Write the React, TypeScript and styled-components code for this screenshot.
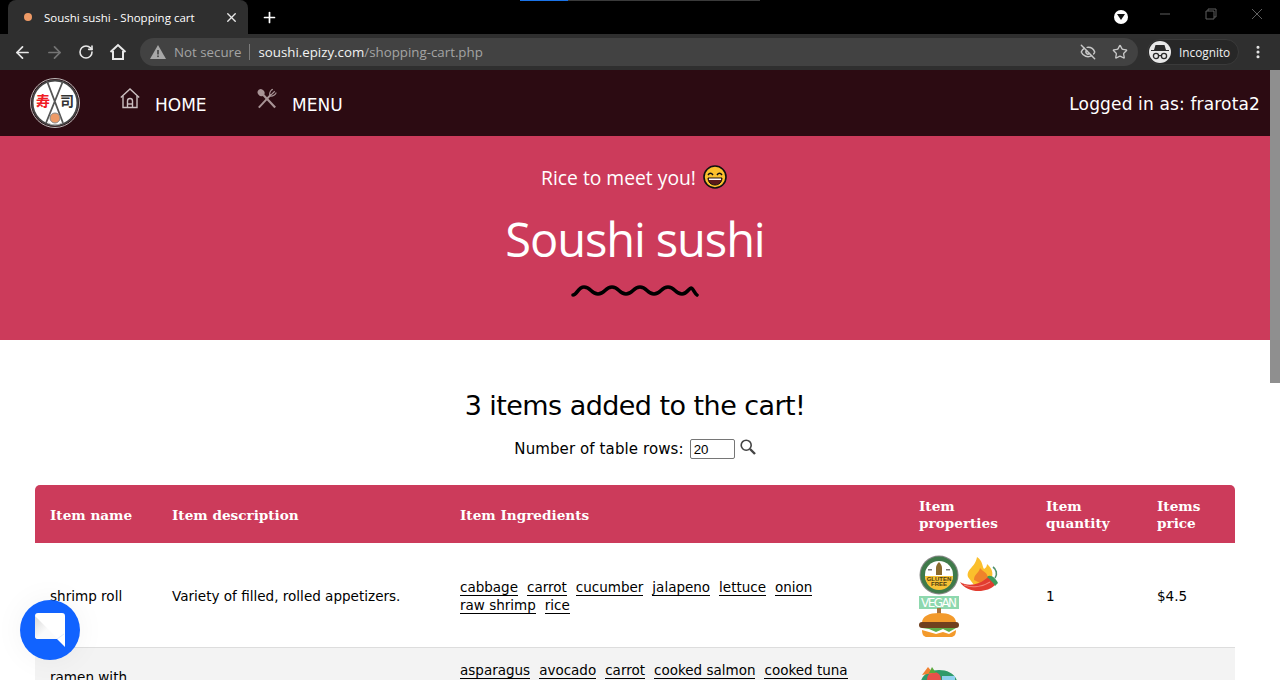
import React from 'react'
import styled, { createGlobalStyle } from 'styled-components'
import { ArrowLeft, ArrowRight, RotateCw, Plus, X, MoreVertical, Star, EyeOff } from 'lucide-react'

const GlobalStyle = createGlobalStyle`
  html, body {
    margin: 0;
    padding: 0;
    height: 680px;
    overflow: hidden;
    background: #fff;
  }
`

const Window = styled.div`
  position: relative;
  width: 1280px;
  height: 680px;
  overflow: hidden;
  display: flex;
  flex-direction: column;
`

const TabStrip = styled.div`
  position: relative;
  height: 34px;
  background: #000;
  display: flex;
  align-items: flex-end;
  padding-left: 8px;
  flex: none;
`

const LoadBar = styled.div`
  position: absolute;
  top: 0;
  left: 520px;
  width: 240px;
  height: 1px;
  background: linear-gradient(to right, #1a73e8 0 48px, #3a3a3a 48px);
`

const Tab = styled.div`
  width: 240px;
  height: 34px;
  box-sizing: border-box;
  background: #2f2f2f;
  border-radius: 8px 8px 0 0;
  display: flex;
  align-items: center;
  padding: 0 9px 0 16px;
  color: #fff;
  font: 11.5px 'Open Sans', sans-serif;
`

const Favicon = styled.span`
  width: 8px;
  height: 8px;
  border-radius: 50%;
  background: #ee9a66;
  margin-right: 12px;
  flex: none;
`

const TabTitle = styled.span`
  flex: 1;
  white-space: nowrap;
`

const NewTab = styled.div`
  margin: 0 0 0 13px;
  height: 34px;
  display: flex;
  align-items: center;
  color: #fff;
`

const WindowControls = styled.div`
  margin-left: auto;
  display: flex;
  align-items: center;
  height: 34px;
  color: #5f5f5f;
`

const ProfileDot = styled.span`
  width: 14px;
  height: 14px;
  border-radius: 50%;
  background: #fff;
  display: flex;
  align-items: center;
  justify-content: center;
  margin-right: 14px;
`

const ControlIcon = styled.span`
  width: 46px;
  display: flex;
  justify-content: center;
  margin-top: -6px;
`

const Toolbar = styled.div`
  height: 36px;
  background: #2f2f2f;
  display: flex;
  align-items: center;
  padding: 0 6px;
  flex: none;
`

const ToolIcon = styled.span<{ $dim?: boolean }>`
  width: 32px;
  display: flex;
  justify-content: center;
  color: ${p => (p.$dim ? '#747474' : '#e8e8e8')};
`

const Omnibox = styled.div`
  width: 998px;
  height: 28px;
  margin-left: 6px;
  border-radius: 14px;
  background: #424242;
  display: flex;
  align-items: center;
  padding-left: 10px;
  box-sizing: border-box;
  font: 13.3px 'Open Sans', sans-serif;
  color: #a4a4a4;
`

const NotSecure = styled.span`
  margin-left: 8px;
  padding-right: 8px;
  border-right: 1px solid #7c7c7c;
  line-height: 16px;
`

const Host = styled.span`
  color: #f2f2f2;
  margin-left: 8px;
`

const OmniIcons = styled.span`
  margin-left: auto;
  display: flex;
  gap: 16px;
  align-items: center;
  padding-right: 10px;
  color: #c8c8c8;
`

const IncognitoPill = styled.div`
  width: 92px;
  height: 26px;
  box-sizing: border-box;
  margin-left: 9px;
  border: 1px solid #3a3a3a;
  background: #272727;
  border-radius: 13px;
  display: flex;
  align-items: center;
  gap: 8px;
  padding-left: 1px;
  color: #f0f0f0;
  font: 11.8px 'Open Sans', sans-serif;
`

const IncognitoBadge = styled.span`
  width: 22px;
  height: 22px;
  border-radius: 50%;
  background: #e8e8e8;
  display: flex;
  align-items: center;
  justify-content: center;
`

const Dots = styled.span`
  margin-left: 11px;
  color: #e8e8e8;
  display: flex;
`

const Viewport = styled.div`
  flex: 1;
  display: flex;
  min-height: 0;
`

const Page = styled.div`
  flex: 1;
  min-width: 0;
  overflow: hidden;
`

const Scrollbar = styled.div`
  width: 10px;
  background: #fff;
  flex: none;
`

const ScrollThumb = styled.div`
  height: 313px;
  background: #8f8f8f;
`

const Nav = styled.nav`
  height: 66px;
  background: #2c0b12;
  display: flex;
  align-items: center;
  padding: 0 10px 0 30px;
  color: #fff;
  font: 17px 'DejaVu Sans', Verdana, sans-serif;
`

const LogoWrap = styled.div`
  width: 50px;
  height: 50px;
  flex: none;
  margin-right: 40px;
`

const NavItem = styled.a`
  display: flex;
  align-items: flex-start;
  gap: 15px;
  width: 137px;
`

const NavIcon = styled.span`
  display: flex;
  margin-top: -4px;
`

const NavLabel = styled.span`
  margin-top: 3px;
`

const LoggedIn = styled.span`
  margin-left: auto;
  margin-top: 2px;
  letter-spacing: 0.15px;
`

const Hero = styled.header`
  height: 204px;
  background: #cc3b5b;
  color: #fff;
  display: flex;
  flex-direction: column;
  align-items: center;
  font-family: 'Open Sans', 'Noto Sans', sans-serif;
`

const Greeting = styled.div`
  margin-top: 27px;
  padding-right: 2px;
  height: 28px;
  display: flex;
  align-items: center;
  gap: 7px;
  font-size: 19.3px;
`

const HeroTitle = styled.h1`
  margin: 16px 0 0;
  font-size: 47px;
  line-height: 64px;
  font-weight: 400;
  letter-spacing: -1.1px;
`

const Squiggle = styled.div`
  margin-top: 13px;
  display: flex;
`

const Content = styled.main`
  padding: 46px 35px 0;
  text-align: center;
`

const CartTitle = styled.h2`
  margin: 0;
  font: 400 27px/40px 'DejaVu Sans', Verdana, sans-serif;
  letter-spacing: -0.55px;
  color: #000;
`

const RowsForm = styled.form`
  margin: 10px 0 23px;
  display: flex;
  justify-content: center;
  align-items: center;
  height: 26px;
  font: 15px 'DejaVu Sans', Verdana, sans-serif;
  letter-spacing: 0.1px;
  color: #000;
`

const RowsInput = styled.input`
  width: 45px;
  height: 20px;
  box-sizing: border-box;
  margin: 0 5px 0 6px;
  padding: 0 3px;
  border: 1px solid #767676;
  border-radius: 2px;
  font: 13.3px 'Liberation Sans', Arial, sans-serif;
`

const SearchButton = styled.span`
  display: flex;
  margin-top: -5px;
`

const Table = styled.table`
  width: 1200px;
  table-layout: fixed;
  border-collapse: separate;
  border-spacing: 0;
  text-align: left;
  font: 13.55px 'DejaVu Sans', Verdana, sans-serif;
  color: #000;
`

const Th = styled.th`
  height: 58px;
  padding: 2px 15px 0;
  box-sizing: border-box;
  background: #cc3b5b;
  color: #fff;
  font: 700 13.6px/17px 'DejaVu Serif', Georgia, serif;

  &:first-child {
    border-top-left-radius: 5px;
  }

  &:last-child {
    border-top-right-radius: 5px;
  }
`

const Tr = styled.tr<{ $shaded?: boolean }>`
  background: ${p => (p.$shaded ? '#f3f3f3' : '#fff')};
`

const Td = styled.td`
  height: 105px;
  padding: 2px 15px 0;
  box-sizing: border-box;
  border-bottom: 1px solid #ddd;
  line-height: 18px;
`

const TopTd = styled.td<{ $top: number }>`
  vertical-align: top;
  padding: ${p => p.$top}px 15px 0;
  line-height: 18px;
`

const Chip = styled.a`
  display: inline-block;
  vertical-align: top;
  margin-right: 9px;
  font-size: 13.5px;
  line-height: 16px;
  height: 18px;
  padding-top: 1px;
  box-sizing: border-box;
  border-bottom: 1px solid #000;
`

const IconGrid = styled.div`
  display: grid;
  grid-template-columns: 40px 40px;
  column-gap: 1px;
  margin-top: -1px;
`

const IconSlot = styled.span<{ $h?: number; $first?: boolean }>`
  height: ${p => p.$h ?? 40}px;
  display: block;
  grid-column: ${p => (p.$first ? 1 : 'auto')};
`

const ChatBubble = styled.div`
  position: absolute;
  left: 20px;
  top: 600px;
  width: 60px;
  height: 60px;
  border-radius: 50%;
  background: #1163ff;
  box-shadow: 0 0 30px rgba(0, 0, 0, 0.05);
  display: flex;
  align-items: center;
  justify-content: center;
`

const GlutenFree = () => (
  <svg width="40" height="40" viewBox="0 0 40 40">
    <circle cx="20" cy="20" r="19.5" fill="#888" />
    <circle cx="20" cy="20" r="18.5" fill="#3f7a4a" />
    <circle cx="20" cy="20" r="14" fill="#fff" />
    <path d="M6 21 H34 A14 14 0 0 1 6 21Z" fill="#f6c136" />
    <path d="M20 7 C22 9 23 11 23 13 V20 H17 V13 C17 11 18 9 20 7Z" fill="#8a6a2c" />
    <rect x="9" y="14" width="4" height="1.5" fill="#777" />
    <rect x="27" y="14" width="4" height="1.5" fill="#777" />
    <text x="20" y="26" textAnchor="middle" fontSize="6" fontWeight="700" fontFamily="Liberation Sans" fill="#4a3a10">GLUTEN</text>
    <text x="20" y="31" textAnchor="middle" fontSize="6" fontWeight="700" fontFamily="Liberation Sans" fill="#4a3a10">FREE</text>
  </svg>
)

const Chili = () => (
  <svg width="40" height="40" viewBox="0 0 40 40">
    <path d="M8 22 C6 14 15 13 17 2 C23 6 22 11 24 14 C26 13 27 11 27 9 C33 14 34 20 30 26 L14 30Z" fill="#fbbf2c" />
    <path d="M14 25 C14 19 19 18 20 13 C23 17 28 17 28 24 L22 29Z" fill="#f0822a" />
    <path d="M0 27 C8 32 20 30 28 22 C33 22 37 26 35 30 C28 38 7 39 0 27Z" fill="#e23c30" />
    <path d="M4 30 C12 33 22 32 30 27" stroke="#f4847a" strokeWidth="1.2" fill="none" />
    <path d="M27 22 C30 19 35 22 38 28 L35 31 C33 27 30 25 27 22Z" fill="#3f9a5a" />
    <path d="M35 23 C38 19 36 14 33 12" stroke="#4f8f6a" strokeWidth="1.6" fill="none" />
  </svg>
)

const Vegan = () => (
  <svg width="40" height="13" viewBox="0 0 40 13">
    <rect x="0" y="0" width="40" height="13" fill="#8ed8ae" />
    <text x="20" y="11" textAnchor="middle" fontSize="12" fontFamily="DejaVu Sans" fill="#fff" textLength="36">VEGAN</text>
  </svg>
)

const Burger = () => (
  <svg width="40" height="29" viewBox="0 0 40 29">
    <rect x="18" y="0" width="4" height="7" fill="#a9713c" />
    <path d="M3 15 C3 8 10 5 20 5 C30 5 37 8 37 15Z" fill="#f39a2b" />
    <rect x="0" y="14" width="40" height="6" rx="3" fill="#70401f" />
    <path d="M3 20 H37 L30 24 L24 21 L17 24 L10 21Z" fill="#5fae4c" />
    <path d="M3 22 L10 24 L17 26 L24 24 L30 26 L37 22 C37 27 35 29 32 29 H8 C5 29 3 27 3 22Z" fill="#f39a2b" />
  </svg>
)

const Salad = () => (
  <svg width="40" height="40" viewBox="0 0 40 40">
    <path d="M1 20 C1 8 10 3 20 3 C30 3 39 8 39 20Z" fill="#2f9a6a" />
    <circle cx="15" cy="12" r="7" fill="#e8504a" />
    <path d="M3 8 L9 0 L14 6Z" fill="#f08030" />
    <path d="M13 0 L17 6 L10 6Z" fill="#5aa83c" />
    <rect x="23" y="9" width="13" height="6" fill="#8fd0ee" />
  </svg>
)

const Logo = () => (
  <svg width="50" height="50" viewBox="0 0 50 50">
    <circle cx="25" cy="25" r="24.5" fill="#2c0b12" stroke="#bdb8b8" strokeWidth="1" />
    <circle cx="25" cy="25" r="22.5" fill="#fff" stroke="#444" strokeWidth="2" />
    <path d="M17 3 L33 45 M33 3 L16 45" stroke="#555" strokeWidth="1.8" />
    <text x="13" y="28" textAnchor="middle" fontSize="14" fontWeight="700" fontFamily="Noto Sans CJK JP" fill="#f01c25">寿</text>
    <text x="37" y="28" textAnchor="middle" fontSize="14" fontWeight="700" fontFamily="Noto Sans CJK JP" fill="#333">司</text>
    <path d="M18 45 Q25 49 32 45" stroke="#bbb" fill="none" />
    <circle cx="25" cy="40" r="5" fill="#ee9a66" stroke="#8a8a8a" />
  </svg>
)

const HomeGlyph = () => (
  <svg width="20" height="21" viewBox="0 0 20 21" fill="none" stroke="#cbbfc0" strokeWidth="1.4">
    <path d="M0.8 9.5 L10 1 L19.2 9.5" />
    <path d="M3 8 V19.5 H17 V8" />
    <path d="M7.5 19.5 V13 A2.5 2.5 0 0 1 12.5 13 V19.5" />
    <path d="M7.5 16 H12.5" />
  </svg>
)

const CutleryGlyph = () => (
  <svg width="20" height="21" viewBox="0 0 22 22" fill="none" stroke="#a89496">
    <path d="M20 21 L6.5 6.5" strokeWidth="2.4" />
    <ellipse cx="4.5" cy="4.5" rx="3.6" ry="4" fill="#a89496" stroke="none" transform="rotate(-40 4.5 4.5)" />
    <path d="M2 21 L15.5 6.5" strokeWidth="2.2" />
    <path d="M14 8 C13 4 16 1 17.5 1 M14.5 8.5 C18 9 21 6 21 4.5 M15.5 7 L19.5 3" strokeWidth="1.3" />
  </svg>
)

const AlertGlyph = () => (
  <svg width="16" height="14" viewBox="0 0 16 14">
    <path d="M8 0 L16 14 H0Z" fill="#a8a8a8" />
    <rect x="7.2" y="5" width="1.6" height="4.5" fill="#424242" />
    <rect x="7.2" y="10.5" width="1.6" height="1.6" fill="#424242" />
  </svg>
)

const ToolbarHome = () => (
  <svg width="18" height="18" viewBox="0 0 18 18" fill="none" stroke="#e8e8e8" strokeWidth="2">
    <path d="M1.5 9 L9 2 L16.5 9" />
    <path d="M4 8 V16 H14 V8" />
  </svg>
)

const SpyGlyph = () => (
  <svg width="18" height="16" viewBox="0 0 18 16" fill="#2a2a2a">
    <path d="M4.5 1 H13.5 L15 6 H18 V7 H0 V6 H3Z" />
    <circle cx="5" cy="12" r="2.6" fill="none" stroke="#2a2a2a" strokeWidth="1.3" />
    <circle cx="13" cy="12" r="2.6" fill="none" stroke="#2a2a2a" strokeWidth="1.3" />
    <rect x="7.5" y="11" width="3" height="1.2" />
  </svg>
)

const SearchGlyph = () => (
  <svg width="16" height="16" viewBox="0 0 16 16" fill="none" stroke="#444" strokeWidth="1.6">
    <circle cx="6.2" cy="6.2" r="5" />
    <path d="M10 10 L15 15" strokeWidth="2.4" />
  </svg>
)

const ChatGlyph = () => (
  <svg width="30" height="34" viewBox="0 0 30 34">
    <defs>
      <linearGradient id="fold" x1="0" y1="0" x2="1" y2="1">
        <stop offset="0" stopColor="#d8d8d8" />
        <stop offset="0.55" stopColor="#fbfbfb" />
      </linearGradient>
    </defs>
    <path d="M3 0 H27 A3 3 0 0 1 30 3 V34 L22 26 H3 A3 3 0 0 1 0 23 V3 A3 3 0 0 1 3 0Z" fill="#fff" />
    <path d="M0 3 L23 26 H3 A3 3 0 0 1 0 23Z" fill="url(#fold)" />
    <path d="M22 26 L29 21" stroke="#cfe0fb" strokeWidth="0.6" />
  </svg>
)

const columns = [122, 288, 459, 127, 111, 93]

const headers = ['Item name', 'Item description', 'Item Ingredients', 'Item properties', 'Item quantity', 'Items price']

const firstIngredients = ['cabbage', 'carrot', 'cucumber', 'jalapeno', 'lettuce', 'onion', 'raw shrimp', 'rice']

const secondIngredients = ['asparagus', 'avocado', 'carrot', 'cooked salmon', 'cooked tuna']

export default function App() {
  return (
    <Window>
      <GlobalStyle />
      <TabStrip>
        <LoadBar />
        <Tab>
          <Favicon />
          <TabTitle>Soushi sushi - Shopping cart</TabTitle>
          <X size={15} strokeWidth={2.2} color="#e8e8e8" />
        </Tab>
        <NewTab>
          <Plus size={17} strokeWidth={2.4} />
        </NewTab>
        <WindowControls>
          <ProfileDot>
            <svg width="8" height="6" viewBox="0 0 8 6">
              <path d="M0 0 H8 L4 6Z" fill="#111" />
            </svg>
          </ProfileDot>
          <ControlIcon>
            <svg width="12" height="12" viewBox="0 0 12 12" stroke="currentColor" fill="none">
              <path d="M1 6 H11" />
            </svg>
          </ControlIcon>
          <ControlIcon>
            <svg width="12" height="12" viewBox="0 0 12 12" stroke="currentColor" fill="none">
              <path d="M1 3 H9 V11 H1Z M3 3 V1 H11 V9 H9" />
            </svg>
          </ControlIcon>
          <ControlIcon>
            <svg width="12" height="12" viewBox="0 0 12 12" stroke="currentColor" fill="none">
              <path d="M1 1 L11 11 M11 1 L1 11" />
            </svg>
          </ControlIcon>
        </WindowControls>
      </TabStrip>
      <Toolbar>
        <ToolIcon>
          <ArrowLeft size={19} strokeWidth={2.2} />
        </ToolIcon>
        <ToolIcon $dim>
          <ArrowRight size={19} strokeWidth={2.2} />
        </ToolIcon>
        <ToolIcon>
          <RotateCw size={16} strokeWidth={2.4} />
        </ToolIcon>
        <ToolIcon>
          <ToolbarHome />
        </ToolIcon>
        <Omnibox>
          <AlertGlyph />
          <NotSecure>Not secure</NotSecure>
          <Host>soushi.epizy.com</Host>
          <span>/shopping-cart.php</span>
          <OmniIcons>
            <EyeOff size={16} strokeWidth={2.2} />
            <Star size={16} strokeWidth={2} />
          </OmniIcons>
        </Omnibox>
        <IncognitoPill>
          <IncognitoBadge>
            <SpyGlyph />
          </IncognitoBadge>
          Incognito
        </IncognitoPill>
        <Dots>
          <MoreVertical size={16} strokeWidth={2.6} />
        </Dots>
      </Toolbar>
      <Viewport>
        <Page>
          <Nav>
            <LogoWrap>
              <Logo />
            </LogoWrap>
            <NavItem>
              <NavIcon>
                <HomeGlyph />
              </NavIcon>
              <NavLabel>HOME</NavLabel>
            </NavItem>
            <NavItem>
              <NavIcon>
                <CutleryGlyph />
              </NavIcon>
              <NavLabel>MENU</NavLabel>
            </NavItem>
            <LoggedIn>Logged in as: frarota2</LoggedIn>
          </Nav>
          <Hero>
            <Greeting>
              Rice to meet you!
              <svg width="24" height="24" viewBox="0 0 24 24">
                <circle cx="12" cy="12" r="11" fill="#fbc02d" stroke="#111" strokeWidth="1.6" />
                <path d="M5 10 Q7.5 6.5 10 10 M14 10 Q16.5 6.5 19 10" stroke="#111" strokeWidth="1.5" fill="none" />
                <path d="M5 13 H19 C19 17 16 20 12 20 C8 20 5 17 5 13Z" fill="#5b1a1a" stroke="#111" />
                <path d="M6 13.5 H18 V15 H6Z" fill="#fff" />
              </svg>
            </Greeting>
            <HeroTitle>Soushi sushi</HeroTitle>
            <Squiggle>
              <svg width="128" height="14" viewBox="0 0 128 14" fill="none" stroke="#000" strokeWidth="3.6" strokeLinecap="round">
                <path d="M2 11 C6 11 7 3 13 3 C20 3 20 10 27 10 C34 10 34 3 41 3 C48 3 48 10 55 10 C62 10 62 3 69 3 C76 3 76 10 83 10 C90 10 90 3 97 3 C104 3 104 10 111 10 C116 10 118 4 120 4 C122 4 124 10 126 11" />
              </svg>
            </Squiggle>
          </Hero>
          <Content>
            <CartTitle>3 items added to the cart!</CartTitle>
            <RowsForm>
              Number of table rows:
              <RowsInput defaultValue="20" />
              <SearchButton>
                <SearchGlyph />
              </SearchButton>
            </RowsForm>
            <Table>
              <colgroup>
                {columns.map((w, i) => (
                  <col key={i} width={w} />
                ))}
              </colgroup>
              <thead>
                <tr>
                  {headers.map(h => (
                    <Th key={h}>{h}</Th>
                  ))}
                </tr>
              </thead>
              <tbody>
                <Tr>
                  <Td>shrimp roll</Td>
                  <Td>Variety of filled, rolled appetizers.</Td>
                  <Td>
                    {firstIngredients.map(name => (
                      <Chip key={name}>{name}</Chip>
                    ))}
                  </Td>
                  <Td>
                    <IconGrid>
                      <IconSlot>
                        <GlutenFree />
                      </IconSlot>
                      <IconSlot>
                        <Chili />
                      </IconSlot>
                      <IconSlot $h={13} $first>
                        <Vegan />
                      </IconSlot>
                      <IconSlot $h={29} $first>
                        <Burger />
                      </IconSlot>
                    </IconGrid>
                  </Td>
                  <Td>1</Td>
                  <Td>$4.5</Td>
                </Tr>
                <Tr $shaded>
                  <TopTd $top={20}>ramen with</TopTd>
                  <TopTd $top={12} />
                  <TopTd $top={13}>
                    {secondIngredients.map(name => (
                      <Chip key={name}>{name}</Chip>
                    ))}
                  </TopTd>
                  <TopTd $top={19}>
                    <IconSlot>
                      <Salad />
                    </IconSlot>
                  </TopTd>
                  <TopTd $top={12} />
                  <TopTd $top={12} />
                </Tr>
              </tbody>
            </Table>
          </Content>
        </Page>
        <Scrollbar>
          <ScrollThumb />
        </Scrollbar>
      </Viewport>
      <ChatBubble>
        <ChatGlyph />
      </ChatBubble>
    </Window>
  )
}
